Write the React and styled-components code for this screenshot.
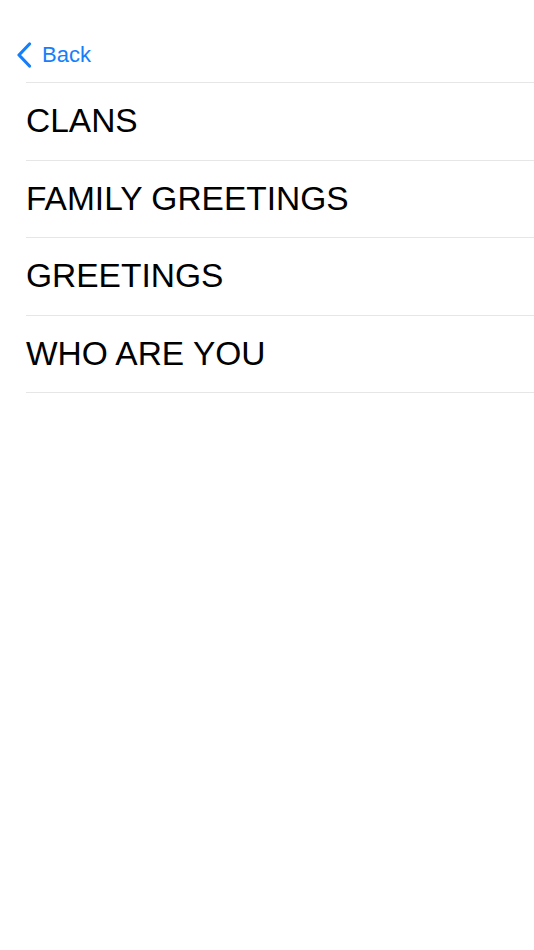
import React from 'react';
import styled, { createGlobalStyle } from 'styled-components';

const GlobalStyle = createGlobalStyle`
  html, body {
    margin: 0;
    padding: 0;
    background: #ffffff;
    font-family: "Liberation Sans", Arial, Helvetica, sans-serif;
  }
`;

const Screen = styled.div`
  width: 534px;
  min-height: 950px;
  background: #ffffff;
`;

const NavBar = styled.div`
  display: flex;
  align-items: center;
  height: 54px;
  padding: 28px 0 0 16px;
`;

const BackButton = styled.button`
  display: flex;
  align-items: center;
  gap: 10px;
  padding: 0;
  border: none;
  background: none;
  color: #157efb;
  font-family: inherit;
  font-size: 22px;
  cursor: pointer;
`;

const List = styled.ul`
  list-style: none;
  margin: 0 0 0 26px;
  padding: 0;
  border-top: 1px solid #e6e6e6;
`;

const Row = styled.li`
  display: flex;
  align-items: center;
  height: 76.5px;
  border-bottom: 1px solid #e6e6e6;
  font-size: 33.5px;
  color: #000000;
  cursor: pointer;
`;

const Chevron = () => (
  <svg width="16" height="26" viewBox="0 0 16 26" fill="none">
    <path
      d="M13.5 2 L3 13 L13.5 24"
      stroke="#157efb"
      strokeWidth="3.2"
      strokeLinecap="round"
      strokeLinejoin="round"
    />
  </svg>
);

const topics = ['CLANS', 'FAMILY GREETINGS', 'GREETINGS', 'WHO ARE YOU'];

const App = () => (
  <Screen>
    <GlobalStyle />
    <NavBar>
      <BackButton>
        <Chevron />
        Back
      </BackButton>
    </NavBar>
    <List>
      {topics.map(topic => (
        <Row key={topic}>{topic}</Row>
      ))}
    </List>
  </Screen>
);

export default App;
